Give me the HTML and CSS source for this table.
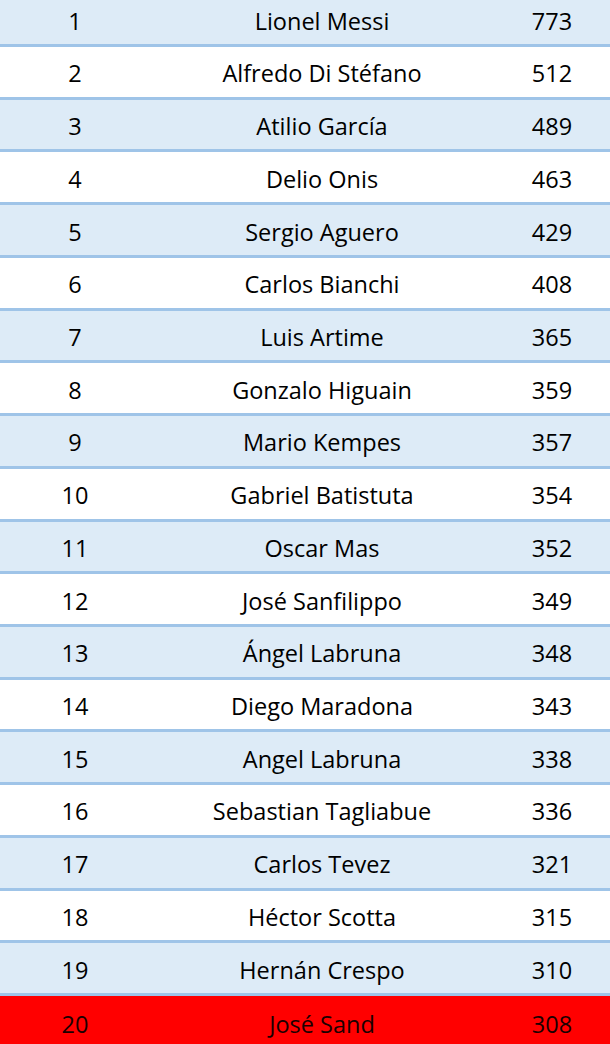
FILE: index.html
```html
<!DOCTYPE html>
<html>
<head>
<meta charset="utf-8">
<link rel="stylesheet" href="styles.css">
</head>
<body>
<div class="table">
  <div class="row blue"><span class="rank">1</span><span class="name">Lionel Messi</span><span class="goals">773</span></div>
  <div class="row"><span class="rank">2</span><span class="name">Alfredo Di Stéfano</span><span class="goals">512</span></div>
  <div class="row blue"><span class="rank">3</span><span class="name">Atilio García</span><span class="goals">489</span></div>
  <div class="row"><span class="rank">4</span><span class="name">Delio Onis</span><span class="goals">463</span></div>
  <div class="row blue"><span class="rank">5</span><span class="name">Sergio Aguero</span><span class="goals">429</span></div>
  <div class="row"><span class="rank">6</span><span class="name">Carlos Bianchi</span><span class="goals">408</span></div>
  <div class="row blue"><span class="rank">7</span><span class="name">Luis Artime</span><span class="goals">365</span></div>
  <div class="row"><span class="rank">8</span><span class="name">Gonzalo Higuain</span><span class="goals">359</span></div>
  <div class="row blue"><span class="rank">9</span><span class="name">Mario Kempes</span><span class="goals">357</span></div>
  <div class="row"><span class="rank">10</span><span class="name">Gabriel Batistuta</span><span class="goals">354</span></div>
  <div class="row blue"><span class="rank">11</span><span class="name">Oscar Mas</span><span class="goals">352</span></div>
  <div class="row"><span class="rank">12</span><span class="name">José Sanfilippo</span><span class="goals">349</span></div>
  <div class="row blue"><span class="rank">13</span><span class="name">Ángel Labruna</span><span class="goals">348</span></div>
  <div class="row"><span class="rank">14</span><span class="name">Diego Maradona</span><span class="goals">343</span></div>
  <div class="row blue"><span class="rank">15</span><span class="name">Angel Labruna</span><span class="goals">338</span></div>
  <div class="row"><span class="rank">16</span><span class="name">Sebastian Tagliabue</span><span class="goals">336</span></div>
  <div class="row blue"><span class="rank">17</span><span class="name">Carlos Tevez</span><span class="goals">321</span></div>
  <div class="row"><span class="rank">18</span><span class="name">Héctor Scotta</span><span class="goals">315</span></div>
  <div class="row blue"><span class="rank">19</span><span class="name">Hernán Crespo</span><span class="goals">310</span></div>
  <div class="row red"><span class="rank">20</span><span class="name">José Sand</span><span class="goals">308</span></div>
</div>
</body>
</html>
```
FILE: styles.css
```css
html, body {
  margin: 0;
  padding: 0;
  background: #ffffff;
  overflow: hidden;
}
.table {
  margin-top: -5.7px;
  font-family: "Open Sans", "Liberation Sans", sans-serif;
  font-size: 23.5px;
  color: #000000;
}
.row {
  box-sizing: border-box;
  height: 52.72px;
  padding-top: 3px;
  display: grid;
  grid-template-columns: 150px 344px 116px;
  align-items: center;
  text-align: center;
  background: #ffffff;
  border-bottom: 3px solid #9fc4e8;
}
.row.blue {
  background: #ddebf7;
}
.row.red {
  background: #ff0000;
  border-bottom: none;
  color: #1a0000;
}
```
